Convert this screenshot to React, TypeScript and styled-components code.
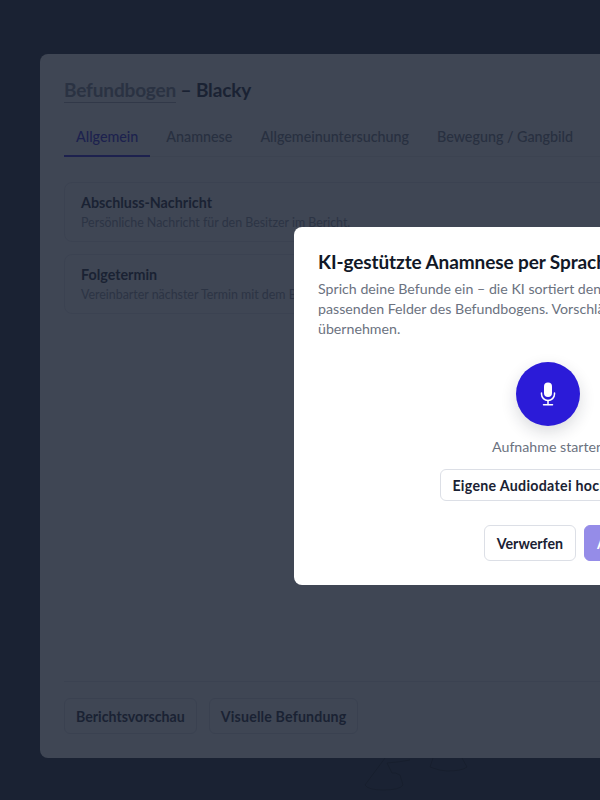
import React from 'react';
import styled, { createGlobalStyle } from 'styled-components';

const GlobalStyle = createGlobalStyle`
  html, body {
    margin: 0;
    padding: 0;
    height: 100%;
    background: #1a2233;
    font-family: "Lato", "Liberation Sans", sans-serif;
  }
`;

const Page = styled.div`
  position: relative;
  width: 600px;
  height: 800px;
  overflow: hidden;
  background: #1a2233;
  padding: 54px 0 0 40px;
  box-sizing: border-box;
`;

const HoofPrint = styled.svg`
  position: absolute;
  left: 350px;
  top: 750px;
`;

const Sheet = styled.div`
  position: relative;
  width: 1120px;
  height: 704px;
  background: #fbfafa;
  border-radius: 8px;
  padding: 24px;
  box-sizing: border-box;
  display: flex;
  flex-direction: column;
`;

const Heading = styled.h1`
  margin: 0;
  font-size: 19px;
  line-height: 24px;
  letter-spacing: -0.15px;
  font-weight: 700;
  color: #1a2233;
  height: 24px;
`;

const BackLink = styled.span`
  color: #7f8492;
  border-bottom: 1px solid #a6aab5;
  padding-bottom: 1px;
`;

const Tabs = styled.div`
  display: flex;
  gap: 4px;
  margin-top: 16px;
  border-bottom: 1px solid #e8e9ed;
`;

const Tab = styled.div<{ $active?: boolean }>`
  padding: 9px 12px 9px;
  font-size: 14.3px;
  line-height: 19px;
  white-space: nowrap;
  font-weight: 500;
  color: ${(p) => (p.$active ? '#2b1bd8' : '#6f7483')};
  border-bottom: 2px solid ${(p) => (p.$active ? '#2b1bd8' : 'transparent')};
  margin-bottom: -1px;
`;

const Sections = styled.div`
  display: flex;
  flex-direction: column;
  gap: 12px;
  margin-top: 25px;
  flex: 1;
`;

const Section = styled.div`
  height: 60px;
  box-sizing: border-box;
  border: 1px solid #e4e6ea;
  border-radius: 8px;
  padding: 10px 16px;
`;

const SectionTitle = styled.div`
  font-size: 14.3px;
  line-height: 19px;
  font-weight: 700;
  color: #1a2233;
`;

const SectionHint = styled.div`
  font-size: 12.4px;
  line-height: 17px;
  margin-top: 2px;
  color: #8a8f9d;
`;

const Footer = styled.div`
  display: flex;
  gap: 12px;
  border-top: 1px solid #e4e6ea;
  padding-top: 16px;
`;

const Button = styled.button<{ $primary?: boolean }>`
  font-family: inherit;
  font-size: 14.2px;
  font-weight: 700;
  height: 36px;
  padding: 0 12px;
  border-radius: 6px;
  white-space: nowrap;
  border: 1px solid ${(p) => (p.$primary ? '#958ce8' : '#dcdfe6')};
  background: ${(p) => (p.$primary ? '#958ce8' : '#ffffff')};
  color: ${(p) => (p.$primary ? '#ffffff' : '#1a2233')};
`;

const FooterButton = styled(Button)<{ $spacing?: number }>`
  padding: 0 11px;
  background: transparent;
  letter-spacing: ${(p) => p.$spacing ?? 0}px;
`;

const ApplyButton = styled(Button)`
  width: 194px;
  text-align: left;
`;

const Backdrop = styled.div`
  position: absolute;
  inset: 0;
  background: rgba(26, 34, 51, 0.84);
  backdrop-filter: blur(0.5px);
`;

const Modal = styled.div`
  position: absolute;
  left: 294px;
  top: 227px;
  width: 508px;
  height: 358px;
  box-sizing: border-box;
  padding: 24px;
  background: #ffffff;
  border-radius: 8px;
  display: flex;
  flex-direction: column;
`;

const ModalTitle = styled.h2`
  margin: 0;
  font-size: 19px;
  line-height: 21px;
  letter-spacing: -0.1px;
  font-weight: 700;
  color: #111827;
  white-space: nowrap;
`;

const ModalText = styled.p`
  margin: 7px 0 0;
  font-size: 14.2px;
  line-height: 20px;
  color: #6b7280;
`;

const Recorder = styled.div`
  display: flex;
  flex-direction: column;
  align-items: center;
  margin-top: 23px;
`;

const MicButton = styled.div`
  width: 64px;
  height: 64px;
  border-radius: 50%;
  background: #2b1bd8;
  color: #ffffff;
  display: flex;
  align-items: center;
  justify-content: center;
  box-shadow: 0 6px 16px rgba(26, 34, 51, 0.16);
`;

const RecordLabel = styled.div`
  margin-top: 11px;
  font-size: 14.2px;
  line-height: 20px;
  color: #6b7280;
`;

const UploadButton = styled(Button)`
  margin-top: 12px;
  height: 32px;
  width: 216px;
  padding: 0;
  letter-spacing: 0.3px;
`;

const ModalActions = styled.div`
  display: flex;
  justify-content: flex-end;
  gap: 8px;
  margin-top: 24px;
`;

const MicIcon = () => (
  <svg width="24" height="24" viewBox="0 0 24 24" fill="none" stroke="currentColor" strokeWidth="1.5" strokeLinecap="round">
    <rect x="8" y="0.5" width="8" height="14.5" rx="4" fill="currentColor" stroke="none" />
    <path d="M5.5 11v1a6.5 6.5 0 0 0 13 0v-1" />
    <path d="M12 18.5v4" />
    <path d="M7.5 22.8h9" />
  </svg>
);

export default function App() {
  return (
    <Page>
      <GlobalStyle />
      <HoofPrint width="130" height="50" viewBox="0 0 130 50" fill="none" stroke="#000000" strokeOpacity="0.7" strokeWidth="1">
        <path d="M35 8 L15 35 Q18 40 33 40 Q50 40 53 35 L50 25 Q45 22 42 23 L37 13 Q50 12 60 10" />
        <path d="M83 8 L80 17 Q90 21 97 21 Q112 21 117 17 L112 8" />
      </HoofPrint>
      <Sheet>
        <Heading>
          <BackLink>Befundbogen</BackLink> – Blacky
        </Heading>
        <Tabs>
          <Tab $active>Allgemein</Tab>
          <Tab>Anamnese</Tab>
          <Tab>Allgemeinuntersuchung</Tab>
          <Tab>Bewegung / Gangbild</Tab>
        </Tabs>
        <Sections>
          <Section>
            <SectionTitle>Abschluss-Nachricht</SectionTitle>
            <SectionHint>Persönliche Nachricht für den Besitzer im Bericht.</SectionHint>
          </Section>
          <Section>
            <SectionTitle>Folgetermin</SectionTitle>
            <SectionHint>Vereinbarter nächster Termin mit dem Besitzer.</SectionHint>
          </Section>
        </Sections>
        <Footer>
          <FooterButton>Berichtsvorschau</FooterButton>
          <FooterButton $spacing={0.16}>Visuelle Befundung</FooterButton>
        </Footer>
      </Sheet>
      <Backdrop />
      <Modal>
        <ModalTitle>KI-gestützte Anamnese per Sprache</ModalTitle>
        <ModalText>
          Sprich deine Befunde ein – die KI sortiert den Inhalt automatisch in die passenden Felder des Befundbogens. Vorschläge kannst du prüfen und übernehmen.
        </ModalText>
        <Recorder>
          <MicButton>
            <MicIcon />
          </MicButton>
          <RecordLabel>Aufnahme starten</RecordLabel>
          <UploadButton>Eigene Audiodatei hochladen</UploadButton>
        </Recorder>
        <ModalActions>
          <Button>Verwerfen</Button>
          <ApplyButton $primary>Auf Befundbogen anwenden</ApplyButton>
        </ModalActions>
      </Modal>
    </Page>
  );
}
